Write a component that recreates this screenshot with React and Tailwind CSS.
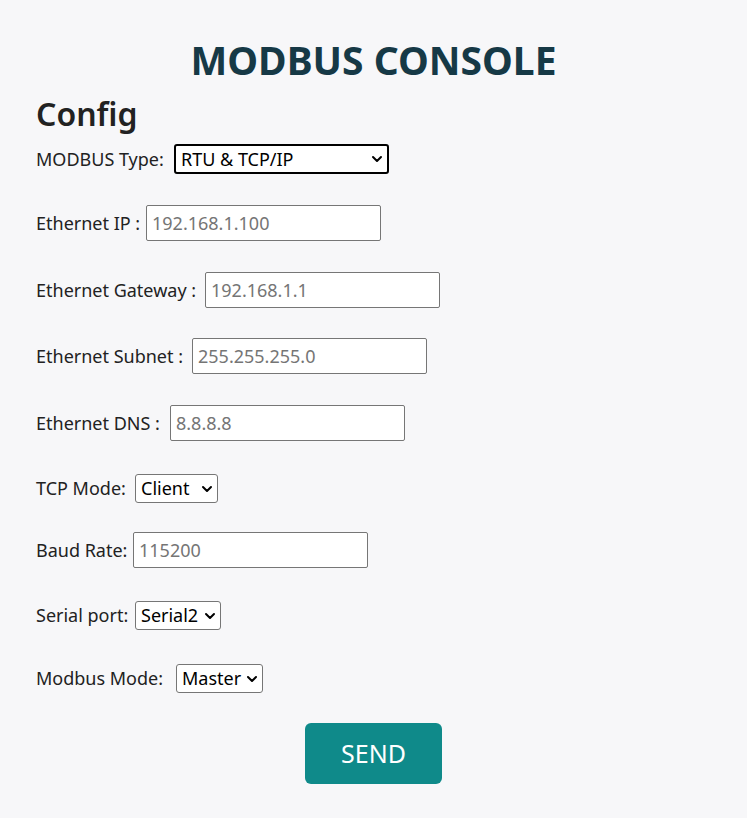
import { ChevronDown } from 'lucide-react';

const font = { fontFamily: '"Noto Sans", "Open Sans", sans-serif' };

function Field({ label, labelW, placeholder, className }) {
  return (
    <div className={`flex items-center ${className}`}>
      <label className={`${labelW} whitespace-nowrap`}>{label}</label>
      <input
        type="text"
        placeholder={placeholder}
        className="h-[36px] w-[235px] border border-[#767676] rounded-[2px] bg-white px-[5px] text-[18px] placeholder:text-[#757575] outline-none"
      />
    </div>
  );
}

function Pick({ label, labelW, value, width, focused, className }) {
  return (
    <div className={`flex items-center ${className}`}>
      <label className={`${labelW} whitespace-nowrap`}>{label}</label>
      <div
        className={`relative flex items-center bg-white rounded-[3px] ${width} ${
          focused ? 'h-[30px] border-2 border-black' : 'h-[29px] border border-[#767676]'
        }`}
      >
        <span className="pl-[5px] text-black whitespace-nowrap">{value}</span>
        <ChevronDown className="absolute right-[2px] w-[16px] h-[16px] text-black" strokeWidth={3} />
      </div>
    </div>
  );
}

export default function App() {
  return (
    <div className="min-h-[818px] bg-[#f7f7f9] text-[#222] text-[18px] pl-[36px] pt-[36px]" style={font}>
      <h1 className="text-center text-[39px] font-bold leading-[48px] text-[#163946] pr-[36px]">MODBUS CONSOLE</h1>
      <h2 className="text-[32px] font-semibold leading-[40px] mt-[10px]">Config</h2>

      <form className="flex flex-col" onSubmit={(e) => e.preventDefault()}>
        <Pick label="MODBUS Type:" labelW="w-[138px]" value="RTU & TCP/IP" width="w-[215px]" focused className="mt-[10px]" />
        <Field label="Ethernet IP :" labelW="w-[110px]" placeholder="192.168.1.100" className="mt-[31px]" />
        <Field label="Ethernet Gateway :" labelW="w-[169px]" placeholder="192.168.1.1" className="mt-[31px]" />
        <Field label="Ethernet Subnet :" labelW="w-[156px]" placeholder="255.255.255.0" className="mt-[30px]" />
        <Field label="Ethernet DNS :" labelW="w-[134px]" placeholder="8.8.8.8" className="mt-[31px]" />
        <Pick label="TCP Mode:" labelW="w-[99px]" value="Client" width="w-[83px]" className="mt-[33px]" />
        <Field label="Baud Rate:" labelW="w-[97px]" placeholder="115200" className="mt-[29px]" />
        <Pick label="Serial port:" labelW="w-[99px]" value="Serial2" width="w-[86px]" className="mt-[33px]" />
        <Pick label="Modbus Mode:" labelW="w-[140px]" value="Master" width="w-[87px]" className="mt-[34px]" />

        <div className="flex justify-center pr-[36px] mt-[30px]">
          <button
            type="submit"
            className="w-[137px] h-[61px] rounded-[6px] bg-[#0f8a8a] text-white text-[25px]"
          >
            SEND
          </button>
        </div>
      </form>
    </div>
  );
}
